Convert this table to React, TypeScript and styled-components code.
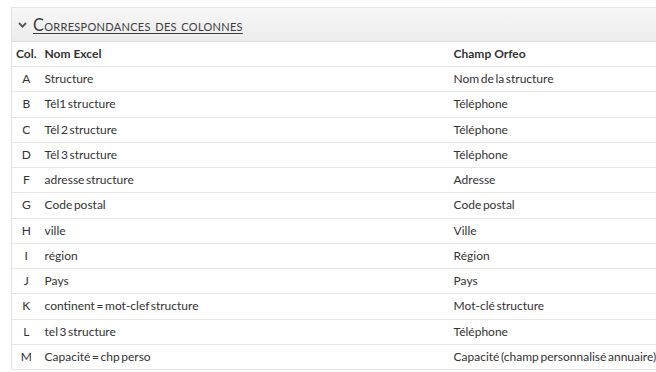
import React from "react";
import styled, { createGlobalStyle } from "styled-components";

const Global = createGlobalStyle`
  html, body { margin: 0; padding: 0; background: #fff; overflow: hidden; }
  body { font-family: Lato, "Open Sans", sans-serif; color: #333; }
`;

const Page = styled.div`
  padding: 7px 0 0 11px;
  width: 700px;
`;

const Panel = styled.section`
  border-left: 1px solid #e3e3e3;
  border-top: 1px solid #e6e6e6;
`;

const PanelHeader = styled.div`
  height: 33px;
  display: flex;
  align-items: center;
  gap: 6px;
  padding-left: 6px;
  background: linear-gradient(#f7f7f7, #ececec);
  border-bottom: 1px solid #dcdcdc;
`;

const Title = styled.a`
  font-size: 16.3px;
  font-variant: small-caps;
  color: #3c3c3c;
  text-decoration: underline;
  text-decoration-thickness: 1px;
  text-underline-offset: 2px;
  letter-spacing: 0.3px;
  cursor: pointer;
`;

const Table = styled.table`
  width: 100%;
  border-collapse: collapse;
  font-size: 12px;
  word-spacing: -1.5px;
`;

const Th = styled.th<{ $w?: string; $center?: boolean }>`
  text-align: ${(p) => (p.$center ? "center" : "left")};
  width: ${(p) => p.$w || "auto"};
  font-weight: 700;
  padding: 4px 4px;
  line-height: 16px;
  border-bottom: 1px solid #e2e2e2;
  color: #333;
  word-spacing: 0;
`;

const Td = styled.td<{ $center?: boolean }>`
  text-align: ${(p) => (p.$center ? "center" : "left")};
  padding: 4px 4px;
  line-height: 16.27px;
  border-bottom: 1px solid #e6e6e6;
  color: #333;
  white-space: nowrap;
`;

const Chevron = () => (
  <svg width="9" height="6" viewBox="0 0 9 6">
    <path d="M1 1 L4.5 4.6 L8 1" fill="none" stroke="#555" strokeWidth="1.8" />
  </svg>
);

const rows: [string, string, string][] = [
  ["A", "Structure", "Nom de la structure"],
  ["B", "Tél1 structure", "Téléphone"],
  ["C", "Tél 2 structure", "Téléphone"],
  ["D", "Tél 3 structure", "Téléphone"],
  ["F", "adresse structure", "Adresse"],
  ["G", "Code postal", "Code postal"],
  ["H", "ville", "Ville"],
  ["I", "région", "Région"],
  ["J", "Pays", "Pays"],
  ["K", "continent = mot-clef structure", "Mot-clé structure"],
  ["L", "tel 3 structure", "Téléphone"],
  ["M", "Capacité = chp perso", "Capacité (champ personnalisé annuaire)"],
];

export default function App() {
  return (
    <>
      <Global />
      <Page>
        <Panel>
          <PanelHeader>
            <Chevron />
            <Title>Correspondances des colonnes</Title>
          </PanelHeader>
          <Table>
            <thead>
              <tr>
                <Th $w="20px" $center>Col.</Th>
                <Th $w="401px">Nom Excel</Th>
                <Th>Champ Orfeo</Th>
              </tr>
            </thead>
            <tbody>
              {rows.map(([c, n, o]) => (
                <tr key={c}>
                  <Td $center>{c}</Td>
                  <Td>{n}</Td>
                  <Td>{o}</Td>
                </tr>
              ))}
            </tbody>
          </Table>
        </Panel>
      </Page>
    </>
  );
}
